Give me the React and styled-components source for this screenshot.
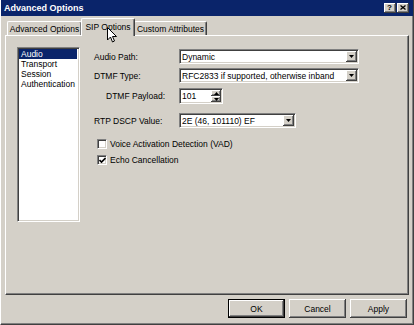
import React from "react";
import styled, { createGlobalStyle } from "styled-components";

const GlobalStyle = createGlobalStyle`
  html, body { margin: 0; padding: 0; background: #D4D0C8; }
  body { font-family: "Liberation Sans", Arial, sans-serif; }
`;

const Window = styled.div`
  position: relative;
  width: 414px;
  height: 325px;
  box-sizing: border-box;
  background: #d4d0c8;
  border-left: 1px solid #ffffff;
  border-right: 1px solid #404040;
  border-bottom: 1px solid #404040;
  box-shadow: inset -1px -1px 0 #808080;
  display: flex;
  flex-direction: column;
  font-size: 8.5px;
  color: #000;
  overflow: hidden;
`;

const TitleBar = styled.div`
  height: 16px;
  margin-left: -1px;
  background: #0a246a;
  display: flex;
  align-items: center;
  padding: 0 4px 0 4px;
  color: #fff;
  font-weight: bold;
  font-size: 9px;
`;

const TitleText = styled.span`
  flex: 1;
  line-height: 12px;
`;

const TitleButtons = styled.div`
  display: flex;
  gap: 1px;
`;

const TitleButton = styled.div`
  box-sizing: border-box;
  width: 12px;
  height: 10px;
  background: #d4d0c8;
  box-shadow: inset -1px -1px #404040, inset 1px 1px #fff, inset -2px -2px #808080;
  display: flex;
  align-items: center;
  justify-content: center;
  color: #000;
  font-size: 8px;
  font-weight: bold;
  line-height: 8px;
  padding: 0 1px 1px 0;
`;

const Body = styled.div`
  flex: 1;
  display: flex;
  flex-direction: column;
  padding: 2px 4px 0 4px;
`;

const TabRow = styled.div`
  height: 17px;
  display: flex;
  align-items: flex-end;
  padding-left: 2px;
`;

const Tab = styled.div`
  position: relative;
  box-sizing: border-box;
  width: ${(p) => p.$w}px;
  height: ${(p) => (p.$active ? "18px" : "14px")};
  margin: ${(p) => (p.$active ? "0 -1px -1px -1px" : "0")};
  z-index: ${(p) => (p.$active ? 2 : 1)};
  padding-bottom: ${(p) => (p.$active ? "2px" : "0")};
  background: #d4d0c8;
  border-top: 1px solid #fff;
  border-left: 1px solid #fff;
  border-right: 1px solid #404040;
  box-shadow: inset -1px 0 #808080;
  border-radius: 2px 2px 0 0;
  display: flex;
  align-items: center;
  justify-content: center;
  white-space: nowrap;
`;

const Panel = styled.div`
  position: relative;
  box-sizing: border-box;
  height: 260px;
  background: #d4d0c8;
  border-top: 1px solid #fff;
  border-left: 1px solid #fff;
  border-right: 1px solid #404040;
  border-bottom: 1px solid #404040;
  box-shadow: inset -1px -1px #808080;
  display: flex;
  align-items: flex-start;
  padding: 11px 0 0 11px;
`;

const ListBox = styled.div`
  box-sizing: border-box;
  width: 63px;
  height: 175px;
  background: #fff;
  border-top: 1px solid #808080;
  border-left: 1px solid #808080;
  border-right: 1px solid #fff;
  border-bottom: 1px solid #fff;
  box-shadow: inset 1px 1px #404040, inset -1px -1px #d4d0c8;
  padding: 1px 2px 2px 1px;
`;

const ListItem = styled.div`
  height: 10px;
  line-height: 10px;
  padding-left: 2px;
  background: ${(p) => (p.$selected ? "#0a246a" : "transparent")};
  color: ${(p) => (p.$selected ? "#fff" : "#000")};
  white-space: nowrap;
`;

const Form = styled.div`
  display: flex;
  flex-direction: column;
  margin: 2px 0 0 14px;
`;

const FieldRow = styled.div`
  display: flex;
  align-items: center;
  margin-top: ${(p) => p.$mt || 0}px;
`;

const Label = styled.div`
  box-sizing: border-box;
  width: 85px;
  padding-left: ${(p) => p.$indent || 0}px;
  white-space: nowrap;
`;

const sunken = `
  box-sizing: border-box;
  background: #fff;
  border-top: 1px solid #808080;
  border-left: 1px solid #808080;
  border-right: 1px solid #fff;
  border-bottom: 1px solid #fff;
  box-shadow: inset 1px 1px #404040, inset -1px -1px #d4d0c8;
`;

const raised = `
  box-sizing: border-box;
  background: #d4d0c8;
  box-shadow: inset -1px -1px #404040, inset 1px 1px #fff, inset -2px -2px #808080;
`;

const Combo = styled.div`
  ${sunken}
  width: ${(p) => p.$w}px;
  height: ${(p) => p.$h || 15}px;
  display: flex;
  align-items: stretch;
  padding: 1px 1px 1px 2px;
`;

const FieldText = styled.span`
  flex: 1;
  align-self: center;
  line-height: 10px;
  white-space: nowrap;
  overflow: hidden;
`;

const ArrowButton = styled.div`
  ${raised}
  width: 11px;
  display: flex;
  align-items: center;
  justify-content: center;
`;

const SpinColumn = styled.div`
  display: flex;
  flex-direction: column;
  width: 10px;
`;

const SpinButton = styled.div`
  ${raised}
  flex: 1;
  display: flex;
  align-items: center;
  justify-content: center;
`;

const CheckRow = styled.div`
  display: flex;
  align-items: center;
  gap: 3px;
  margin-top: ${(p) => p.$mt || 0}px;
  padding-left: 3px;
`;

const CheckBox = styled.div`
  ${sunken}
  width: 10px;
  height: 10px;
  display: flex;
  align-items: center;
  justify-content: center;
`;

const Footer = styled.div`
  display: flex;
  justify-content: flex-end;
  gap: 4px;
  padding: 4px 2px 0 0;
`;

const Button = styled.div`
  box-sizing: border-box;
  width: 57px;
  height: 19px;
  background: #d4d0c8;
  border: ${(p) => (p.$default ? "1px solid #000" : "none")};
  box-shadow: inset -1px -1px #404040, inset 1px 1px #fff, inset -2px -2px #808080;
  display: flex;
  align-items: center;
  justify-content: center;
`;

const Cursor = styled.svg`
  position: absolute;
  left: 106px;
  top: 27px;
  z-index: 10;
`;

const Down = () => (
  <svg width="5" height="3" viewBox="0 0 5 3">
    <path d="M0 0H5L2.5 3Z" fill="#000" />
  </svg>
);
const Up = () => (
  <svg width="5" height="3" viewBox="0 0 5 3">
    <path d="M0 3H5L2.5 0Z" fill="#000" />
  </svg>
);

export default function App() {
  return (
    <>
      <GlobalStyle />
      <Window>
        <TitleBar>
          <TitleText>Advanced Options</TitleText>
          <TitleButtons>
            <TitleButton>?</TitleButton>
            <TitleButton>
              <svg width="6" height="5" viewBox="0 0 6 5">
                <path d="M0.5 0.5L5.5 4.5M5.5 0.5L0.5 4.5" stroke="#000" strokeWidth="1.3" />
              </svg>
            </TitleButton>
          </TitleButtons>
        </TitleBar>
        <Body>
          <TabRow>
            <Tab $w={75}>Advanced Options</Tab>
            <Tab $w={54} $active>SIP Options</Tab>
            <Tab $w={73}>Custom Attributes</Tab>
          </TabRow>
          <Panel>
            <ListBox>
              <ListItem $selected>Audio</ListItem>
              <ListItem>Transport</ListItem>
              <ListItem>Session</ListItem>
              <ListItem>Authentication</ListItem>
            </ListBox>
            <Form>
              <FieldRow>
                <Label>Audio Path:</Label>
                <Combo $w={180}>
                  <FieldText>Dynamic</FieldText>
                  <ArrowButton><Down /></ArrowButton>
                </Combo>
              </FieldRow>
              <FieldRow $mt={4}>
                <Label>DTMF Type:</Label>
                <Combo $w={180}>
                  <FieldText>RFC2833 if supported, otherwise inband</FieldText>
                  <ArrowButton><Down /></ArrowButton>
                </Combo>
              </FieldRow>
              <FieldRow $mt={5}>
                <Label $indent={12}>DTMF Payload:</Label>
                <Combo $w={44} $h={16}>
                  <FieldText>101</FieldText>
                  <SpinColumn>
                    <SpinButton><Up /></SpinButton>
                    <SpinButton><Down /></SpinButton>
                  </SpinColumn>
                </Combo>
              </FieldRow>
              <FieldRow $mt={9}>
                <Label>RTP DSCP Value:</Label>
                <Combo $w={117}>
                  <FieldText>2E (46, 101110) EF</FieldText>
                  <ArrowButton><Down /></ArrowButton>
                </Combo>
              </FieldRow>
              <CheckRow $mt={11}>
                <CheckBox />
                <span>Voice Activation Detection (VAD)</span>
              </CheckRow>
              <CheckRow $mt={6}>
                <CheckBox>
                  <svg width="7" height="7" viewBox="0 0 7 7">
                    <path d="M0.5 3L2.5 5L6.5 1" stroke="#000" strokeWidth="1.6" fill="none" />
                  </svg>
                </CheckBox>
                <span>Echo Cancellation</span>
              </CheckRow>
            </Form>
          </Panel>
          <Footer>
            <Button $default>OK</Button>
            <Button>Cancel</Button>
            <Button>Apply</Button>
          </Footer>
        </Body>
        <Cursor width="10" height="17" viewBox="0 0 10 17">
          <path d="M0.5 0.5V13L3.5 10L5.5 15L7.5 14L5.5 9.5H9.5Z" fill="#fff" stroke="#000" strokeWidth="1" />
        </Cursor>
      </Window>
    </>
  );
}
